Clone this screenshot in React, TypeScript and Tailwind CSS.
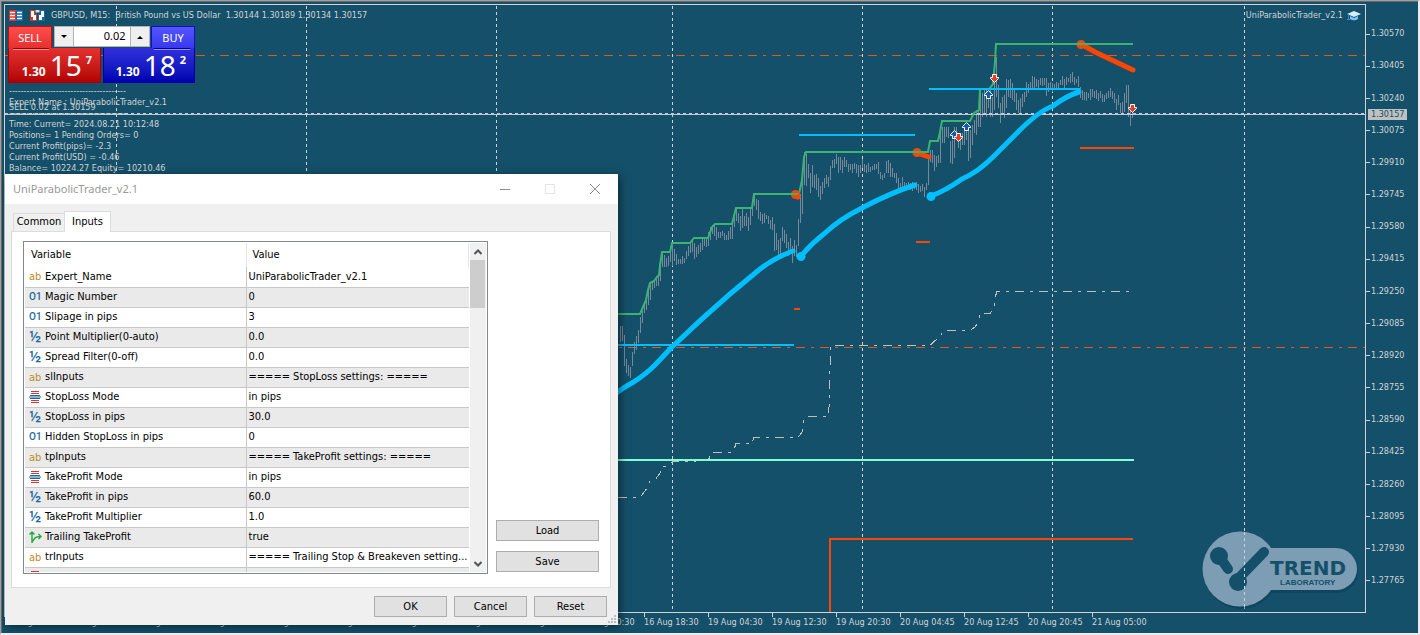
import React from 'react';

type VarType = 'string' | 'int' | 'double' | 'enum' | 'bool';

interface InputVariable {
  type: VarType;
  name: string;
  value: string;
}

const variables: InputVariable[] = [
  { type: 'string', name: 'Expert_Name', value: 'UniParabolicTrader_v2.1' },
  { type: 'int', name: 'Magic Number', value: '0' },
  { type: 'int', name: 'Slipage in pips', value: '3' },
  { type: 'double', name: 'Point Multiplier(0-auto)', value: '0.0' },
  { type: 'double', name: 'Spread Filter(0-off)', value: '0.0' },
  { type: 'string', name: 'slInputs', value: '===== StopLoss settings: =====' },
  { type: 'enum', name: 'StopLoss Mode', value: 'in pips' },
  { type: 'double', name: 'StopLoss in pips', value: '30.0' },
  { type: 'int', name: 'Hidden StopLoss in pips', value: '0' },
  { type: 'string', name: 'tpInputs', value: '===== TakeProfit settings: =====' },
  { type: 'enum', name: 'TakeProfit Mode', value: 'in pips' },
  { type: 'double', name: 'TakeProfit in pips', value: '60.0' },
  { type: 'double', name: 'TakeProfit Multiplier', value: '1.0' },
  { type: 'bool', name: 'Trailing TakeProfit', value: 'true' },
  { type: 'string', name: 'trInputs', value: '===== Trailing Stop & Breakeven setting...' },
  { type: 'enum', name: '', value: '' },
];

const prices = [
  '1.30570', '1.30405', '1.30240', '1.30075', '1.29910', '1.29745', '1.29580', '1.29415', '1.29250',
  '1.29085', '1.28920', '1.28755', '1.28590', '1.28425', '1.28260', '1.28095', '1.27930', '1.27765',
];

const times = [
  '13 Aug 10:30', '13 Aug 18:30', '14 Aug 02:30', '14 Aug 10:30', '14 Aug 18:30', '15 Aug 02:30',
  '15 Aug 10:30', '15 Aug 18:30', '16 Aug 02:30', '16 Aug 10:30', '16 Aug 18:30', '19 Aug 04:30',
  '19 Aug 12:30', '19 Aug 20:30', '20 Aug 04:45', '20 Aug 12:45', '20 Aug 20:45', '21 Aug 05:00',
];

// high/low of every candle, one each two pixels, starting at x = 620
const bars: [number, number][] = [
  [326, 342], [326, 341], [335, 366], [359, 373], [365, 376], [367, 378], [352, 366], [342, 354], [336, 350], [330, 343],
  [317, 333], [308, 323], [303, 313], [298, 310], [290, 305], [282, 300], [282, 290], [280, 288], [277, 286], [274, 286],
  [264, 281], [253, 267], [255, 267], [258, 267], [256, 266], [249, 262], [245, 266], [249, 261], [254, 265], [259, 264],
  [259, 264], [256, 264], [258, 263], [251, 259], [246, 256], [243, 253], [241, 252], [243, 259], [247, 257], [245, 254],
  [243, 252], [239, 250], [238, 246], [238, 247], [232, 246], [227, 240], [225, 234], [225, 236], [227, 240], [232, 238],
  [232, 238], [231, 236], [233, 240], [235, 240], [231, 240], [227, 239], [223, 239], [217, 227], [208, 221], [213, 223],
  [216, 231], [208, 228], [216, 226], [213, 226], [217, 231], [208, 225], [200, 216], [194, 206], [199, 210], [200, 219],
  [212, 221], [214, 224], [213, 223], [215, 219], [216, 224], [220, 229], [217, 230], [224, 251], [233, 250], [240, 256],
  [238, 254], [227, 241], [230, 243], [234, 248], [242, 256], [238, 252], [246, 263], [240, 256], [245, 257], [219, 246],
  [194, 223], [170, 214], [152, 185], [154, 186], [164, 178], [173, 193], [165, 187], [175, 188], [174, 190], [178, 197],
  [186, 200], [182, 194], [178, 188], [175, 184], [177, 187], [166, 180], [160, 168], [159, 168], [154, 164], [157, 173],
  [157, 170], [160, 173], [157, 167], [160, 167], [164, 172], [164, 170], [164, 173], [163, 169], [164, 173], [165, 177],
  [165, 173], [159, 168], [164, 172], [165, 173], [163, 172], [167, 172], [166, 170], [164, 170], [164, 169], [162, 174],
  [172, 179], [175, 180], [173, 178], [161, 173], [160, 173], [163, 177], [168, 177], [173, 178], [173, 183], [178, 188],
  [183, 190], [177, 188], [182, 190], [183, 190], [182, 189], [183, 190], [182, 191], [183, 189], [182, 190], [184, 193],
  [186, 192], [184, 191], [187, 197], [183, 190], [157, 185], [150, 162], [150, 163], [155, 171], [156, 167], [155, 163],
  [130, 163], [127, 143], [127, 143], [127, 137], [127, 138], [141, 163], [140, 164], [127, 158], [127, 140], [133, 148],
  [140, 150], [133, 145], [130, 145], [125, 140], [130, 161], [130, 158], [125, 145], [120, 133], [110, 135], [110, 127],
  [90, 127], [93, 117], [90, 115], [90, 117], [95, 108], [90, 117], [97, 117], [80, 110], [57, 97], [85, 108],
  [103, 123], [97, 115], [95, 118], [79, 108], [80, 97], [79, 98], [83, 100], [88, 102], [93, 110], [100, 113],
  [98, 113], [94, 107], [92, 102], [82, 97], [84, 93], [82, 90], [76, 90], [77, 90], [79, 87], [80, 88],
  [78, 85], [78, 86], [78, 85], [78, 96], [83, 92], [82, 88], [83, 92], [84, 89], [82, 88], [83, 88],
  [80, 85], [76, 85], [79, 90], [77, 85], [78, 82], [74, 83], [72, 82], [77, 85], [79, 83], [76, 87],
  [87, 98], [90, 100], [92, 100], [92, 101], [93, 98], [89, 100], [89, 97], [91, 98], [90, 99], [93, 101],
  [91, 98], [94, 102], [95, 102], [93, 99], [91, 98], [88, 97], [91, 99], [93, 103], [99, 110], [95, 105],
  [103, 113], [102, 113], [93, 112], [85, 103], [85, 117], [106, 126], [107, 118],
];

const barsPath = bars.map(([high, low], i) => `M${620.5 + i * 2} ${high}V${low}`).join('');

const arrows = [
  { x: 988, y: 94, up: true },
  { x: 966, y: 126, up: true },
  { x: 954, y: 134, up: true },
  { x: 958, y: 137, up: false },
  { x: 994, y: 78, up: false },
  { x: 1132, y: 108, up: false },
];

function Chart() {
  return (
    <svg className="absolute inset-0 h-full w-full" viewBox="5 5 1360 607" preserveAspectRatio="none" fill="none">
      <g stroke="#d3d3d3" strokeDasharray="3 3" shapeRendering="crispEdges">
        {[116.5, 306.5, 496.5, 672.5, 862.5, 1052.5, 1244.5].map((x) => (
          <path key={x} d={`M${x} 6V612`} />
        ))}
      </g>
      <g stroke="#e8541a" strokeDasharray="9 6 3 6" shapeRendering="crispEdges">
        <path d="M4 55.5H1365" />
        <path d="M4 347.5H1365" />
      </g>
      <path d={barsPath} stroke="#778899" shapeRendering="crispEdges" />
      <path d="M5 113.5H1365" stroke="#c9c9ec" strokeDasharray="3 3" shapeRendering="crispEdges" />
      <path d="M5 114.5H1365" stroke="#c8c8c8" shapeRendering="crispEdges" />

      <path
        d="M618 497.5H640L642 495L647 488L650 481L656 478.500L660 473L662 466.500H668L672 462L685 461.500L708 460.500L712 452.500H733L736 443.500H752L754 437.500H798L802 432L804 420L806 416.500H828.500L829.500 398L830.500 345.500H930L935 340.500L940 338L943 330.500H970L975 327L979 321L980 313.500H990L994 307L996.500 291.500H1132"
        stroke="#c0c0c0"
        strokeDasharray="9 6 3 6"
        shapeRendering="crispEdges"
      />

      <g stroke="#3cb371" strokeWidth="2">
        <path d="M618 314H640L643 307L646 300L648 290L650 283L654 281L657 277L659 275L660 265L662 252H670L672 243H690L694 238H708L712 227L715 224H732L736 208H752L754 194H799L802 180L804 157L806 152H928L930 141H938L940 132L942 121H970L974 113L979 110L980 89H989L993 84L995 62L996 44H1133" />
      </g>
      <g stroke="#00bfff" strokeWidth="2">
        <path d="M618 345H794M799 135H915M929 89H1080" />
      </g>
      <g stroke="#00bfff" strokeWidth="5" strokeLinecap="round" strokeLinejoin="round">
        <path d="M614 395Q624 387 632 383Q645 375 655 365L672 347Q700 320 730 294L760 269Q776 257 793 251" />
        <path d="M801 256Q812 243 825 233Q840 219 862 208Q890 193 915 185" />
        <path d="M931 196Q945 191 962 179Q978 172 993 157L1013 137Q1038 111 1053 106Q1066 96 1079 92" />
      </g>
      <g fill="#00bfff">
        <circle cx="801" cy="256.500" r="4.500" />
        <circle cx="931" cy="196.500" r="4.500" />
      </g>

      <g stroke="#ff4500" strokeWidth="5" strokeLinecap="round">
        <path d="M796 195L798 197M917 153L929 157M1081 44L1095 52L1133 70" />
      </g>
      <g fill="#ff4500">
        <circle cx="795.500" cy="194.500" r="4.500" />
        <circle cx="917" cy="152.500" r="4.500" />
        <circle cx="1081" cy="44.500" r="4.500" />
      </g>
      <path d="M754 194H798M905 152H928M1074 44H1133" stroke="#3cb371" strokeWidth="2" />
      <path d="M794 309H800M916 242H930M1080 148H1134M830 612V539H1133" stroke="#ff4500" strokeWidth="2" />
      <path d="M618 460H1134" stroke="#7fffd4" strokeWidth="2" />

      {arrows.map((a) => (
        <path
          key={`${a.x}-${a.y}`}
          transform={`translate(${a.x + 0.5} ${a.y + 0.5})`}
          d={a.up ? 'M0-4L4 0V1H2V4H-2V1H-4V0Z' : 'M0 4L4 0V-1H2V-4H-2V-1H-4V0Z'}
          fill={a.up ? '#0b5cb8' : '#e8401c'}
          stroke="#ffffff"
        />
      ))}
    </svg>
  );
}

function Watermark() {
  return (
    <svg className="absolute right-1 bottom-0 h-[88px] w-[166px]" viewBox="1195 524 166 88">
      <g fill="#0b3a50" opacity="0.45" transform="translate(1 3)">
        <circle cx="1240" cy="569" r="37" />
        <rect x="1240" y="548" width="117" height="42" rx="21" />
      </g>
      <g fill="#7c9db3">
        <circle cx="1240" cy="569" r="37.500" />
        <rect x="1240" y="548" width="117" height="42" rx="21" />
      </g>
      <g fill="#14506a" stroke="#14506a" strokeLinecap="round">
        <circle cx="1219" cy="556" r="9" stroke="none" />
        <path d="M1219 556L1228 569" strokeWidth="10" />
        <circle cx="1238" cy="582" r="9" stroke="none" />
        <path d="M1238 579L1264 552" strokeWidth="10" />
      </g>
      <path d="M1244.500 532V607" stroke="#c5d2da" strokeDasharray="3 3" />
      <text x="1270" y="575" fill="#14506a" fontFamily="DejaVu Sans, sans-serif" fontSize="20" fontWeight="700">
        TREND
      </text>
      <text x="1280" y="585" fill="#14506a" fontFamily="Liberation Sans, sans-serif" fontSize="8" fontWeight="700">
        LABORATORY
      </text>
    </svg>
  );
}

function ChartHeader() {
  return (
    <div className="flex h-3 items-center pr-1 pl-1 whitespace-pre">
      <svg className="h-3 w-[14px]" viewBox="0 0 14 12">
        <path d="M0 0H7V11H0Z" fill="#d9352c" />
        <path d="M7 0H14V11H7Z" fill="#1565a8" />
        <path d="M1 2.500H6M1 5.500H6M1 8.500H6M8 2.500H13M8 5.500H13M8 8.500H13" stroke="#fff" strokeWidth="1.500" />
      </svg>
      <svg className="ml-[7px] h-3 w-[15px]" viewBox="0 0 15 12">
        <path d="M0 0H5V4H7V11H0Z" fill="#d9352c" />
        <path d="M15 0H10V4H8V11H15Z" fill="#1565a8" />
        <path d="M1 1H4V5H6V10H3V7H1ZM14 1H11V5H9V10H12V7H14Z" fill="#fff" />
        <path d="M5.500 0H9.500V2.500H5.500Z" fill="#ddd" />
      </svg>
      <span className="ml-1.5">{'GBPUSD, M15:  British Pound vs US Dollar  1.30144 1.30189 1.30134 1.30157'}</span>
      <span className="ml-auto">UniParabolicTrader_v2.1</span>
      <svg className="ml-1 h-3 w-[14px]" viewBox="0 0 14 12">
        <path d="M7 1L14 4L7 7L0 4Z" fill="#d6efff" />
        <path d="M3 6L7 8L11 6V9Q7 11.500 3 9Z" fill="#7cc6f5" />
        <path d="M1.500 4V9M0 9.500H3" stroke="#2b8fd6" fill="none" />
      </svg>
    </div>
  );
}

function TradePanel() {
  return (
    <div className="mt-1 ml-[3px] w-[187px] font-['Noto_Sans',sans-serif] text-white">
      <div className="flex h-[22px] justify-between">
        <button className="w-11 border border-b-0 border-[#c40d0d] bg-linear-to-b from-[#ff4d4d] to-[#e53030] text-[11px] leading-5">SELL</button>
        <div className="flex h-[21px] w-24 border border-[#b4b4b4] bg-[#b4b4b4] text-black">
          <button className="flex w-[18px] items-center justify-center bg-[#efefef]" aria-label="Decrease volume">
            <svg className="h-1 w-1.5" viewBox="0 0 6 4"><path d="M0 0H6L3 3Z" /></svg>
          </button>
          <input
            className="mx-px w-0 flex-1 bg-white pr-1 text-right text-[11px] outline-none"
            defaultValue="0.02"
            aria-label="Volume"
          />
          <button className="flex w-[18px] items-center justify-center bg-[#efefef]" aria-label="Increase volume">
            <svg className="h-1 w-1.5" viewBox="0 0 6 4"><path d="M0 4H6L3 1Z" /></svg>
          </button>
        </div>
        <button className="w-11 border border-b-0 border-[#1010c4] bg-linear-to-b from-[#5555ff] to-[#3838ee] text-[11px] leading-5">BUY</button>
      </div>
      <div className="flex h-[35px] justify-between">
        <PriceButton base="1.30" big="15" point="7" side="sell" />
        <PriceButton base="1.30" big="18" point="2" side="buy" />
      </div>
    </div>
  );
}

interface PriceButtonProps {
  base: string;
  big: string;
  point: string;
  side: 'sell' | 'buy';
}

function PriceButton({ base, big, point, side }: PriceButtonProps) {
  const sell = side === 'sell';
  return (
    <button
      aria-label={`${side} at ${base}${big}${point}`}
      className={
        sell
          ? 'relative flex w-[93px] items-end justify-end border border-t-0 border-[#a80000] bg-linear-to-b from-[#e53030] to-[#b20000] pr-2'
          : 'relative flex w-[92px] items-end justify-end border border-t-0 border-[#0000a0] bg-linear-to-b from-[#3030dd] to-[#0000b0] pr-2'
      }
    >
      <span
        className={
          sell
            ? 'absolute top-0 left-1 w-9 border-t border-b border-t-[#900] border-b-[#ff9090]'
            : 'absolute top-0 right-1 w-9 border-t border-b border-t-[#009] border-b-[#9090ff]'
        }
      />
      <span className="mb-1 text-[12px] leading-3 font-bold">{base}</span>
      <span className="ml-1 text-[28px] leading-[34px]">{big}</span>
      <span className="mb-auto ml-1 pt-1 text-[11px] leading-4 font-bold">{point}</span>
    </button>
  );
}

function Comments() {
  return (
    <div className="relative mt-[3px] ml-1 leading-[11px] whitespace-pre">
      <p>----------------------------------------</p>
      <p>Expert Name : UniParabolicTrader_v2.1</p>
      <p>----------------------------------------</p>
      <p>Time: Current= 2024.08.21 10:12:48</p>
      <p>Positions= 1 Pending Orders= 0</p>
      <p>Current Profit(pips)= -2.3</p>
      <p>Current Profit(USD) = -0.46</p>
      <p>Balance= 10224.27 Equity= 10210.46</p>
      <p className="absolute top-4 left-0">SELL 0.02 at 1.30159</p>
    </div>
  );
}

function TypeIcon({ type }: { type: VarType }) {
  switch (type) {
    case 'string':
      return <span className="text-[11px] text-[#c08a2a]">ab</span>;
    case 'int':
      return <span className="font-[Roboto] text-[10px] font-medium text-[#1c67a0]">O1</span>;
    case 'double':
      return <span className="font-[Roboto] text-[16px] font-medium text-[#1c67a0]">½</span>;
    case 'enum':
      return (
        <svg className="h-3 w-3" viewBox="0 0 12 12">
          <path d="M2 .500H10M2 2.500H10M2 9.500H10M2 11.500H10" stroke="#d9352c" />
          <path d="M1 4.500H11M0 6H12M1 7.500H11" stroke="#1c67a0" />
        </svg>
      );
    default:
      return (
        <svg className="h-3 w-[13px]" viewBox="0 0 13 12" fill="none" stroke="#22a83c">
          <path d="M3 12V1M.500 3.500L3 1L5.500 3.500M3 11L6 7Q7.500 5.500 12 5.500M9.500 3L12 5.500L9.500 8" strokeWidth="1.400" />
        </svg>
      );
  }
}

const dialogButton = 'h-[21px] border border-[#adadad] bg-[#e1e1e1] text-center leading-[19px]';

function InputsDialog() {
  return (
    <section
      role="dialog"
      aria-label="UniParabolicTrader_v2.1"
      className="absolute top-[173px] left-1 w-[613px] bg-[#f0f0f0] pb-2 font-['DejaVu_Sans_Condensed','DejaVu_Sans',sans-serif] text-[11px] text-black shadow-[2px_2px_8px_rgba(0,0,0,0.5)]"
    >
      <header className="flex h-[30px] items-center bg-white pr-[17px] pl-2 font-['Noto_Sans',sans-serif] text-[#999]">
        <h1 className="mr-auto">UniParabolicTrader_v2.1</h1>
        <div className="flex items-center gap-[33px]">
          <button aria-label="Minimize">
            <svg className="h-3 w-3" viewBox="0 0 12 12"><path d="M1 6.500H11" stroke="#8c8c8c" /></svg>
          </button>
          <button aria-label="Maximize" disabled>
            <svg className="h-3 w-3" viewBox="0 0 12 12"><path d="M1.500 1.500H10.500V10.500H1.500Z" stroke="#e4e4e4" fill="none" /></svg>
          </button>
          <button aria-label="Close">
            <svg className="h-3 w-3" viewBox="0 0 12 12"><path d="M1 1L11 11M11 1L1 11" stroke="#8c8c8c" /></svg>
          </button>
        </div>
      </header>

      <div className="pt-[7px] pr-[7px] pl-1.5">
        <div className="flex items-end pl-0.5" role="tablist">
          <button role="tab" aria-selected="false" className="h-[18px] w-[51px] border border-r-0 border-b-0 border-[#dcdcdc]">Common</button>
          <button role="tab" aria-selected="true" className="relative -mb-px h-[21px] w-[47px] border border-b-0 border-[#dcdcdc] bg-white">Inputs</button>
        </div>

        <div className="flex gap-2 border border-[#dcdcdc] bg-white pt-[9px] pr-[11px] pb-[13px] pl-[11px]">
          <div className="flex h-[333px] flex-1 border border-[#828790] p-px">
            <div className="h-full flex-1 overflow-hidden">
              <table className="w-full table-fixed border-collapse text-left">
                <thead>
                  <tr className="h-6">
                    <th className="w-[221px] border-r border-[#e5e5e5] pl-1.5 font-normal">Variable</th>
                    <th className="border-r border-[#e5e5e5] pl-1.5 font-normal">Value</th>
                  </tr>
                </thead>
                <tbody>
                  {variables.map((v, i) => (
                    <tr key={i} className="h-5 border-b border-[#c8c8c8] even:bg-[#eaeaea]">
                      <td className="border-r border-[#c8c8c8] p-0 pl-1">
                        <div className="flex h-[19px] items-center">
                          <span className="flex w-4 items-center leading-none">
                            <TypeIcon type={v.type} />
                          </span>
                          <span>{v.name}</span>
                        </div>
                      </td>
                      <td className="truncate p-0 pl-0.5">{v.value}</td>
                    </tr>
                  ))}
                </tbody>
              </table>
            </div>
            <div className="ml-px flex w-4 flex-col bg-[#f0f0f0]">
              <button className="flex h-[17px] w-[15px] items-center justify-center" aria-label="Scroll up">
                <svg className="h-2 w-2" viewBox="0 0 8 8"><path d="M.500 6L4 2.500L7.500 6" stroke="#555" strokeWidth="2" fill="none" /></svg>
              </button>
              <div className="h-12 w-[15px] bg-[#cdcdcd]" />
              <button className="mt-auto flex h-[17px] w-[15px] items-center justify-center" aria-label="Scroll down">
                <svg className="h-2 w-2" viewBox="0 0 8 8"><path d="M.500 2L4 5.500L7.500 2" stroke="#555" strokeWidth="2" fill="none" /></svg>
              </button>
            </div>
          </div>
          <div className="flex w-[103px] flex-col justify-end gap-2.5 pb-0.5">
            <button className={dialogButton}>Load</button>
            <button className={dialogButton}>Save</button>
          </div>
        </div>

        <div className="flex justify-end gap-[7px] pt-2 pr-1">
          <button className={`${dialogButton} w-[73px]`}>OK</button>
          <button className={`${dialogButton} w-[73px]`}>Cancel</button>
          <button className={`${dialogButton} w-[73px]`}>Reset</button>
        </div>
      </div>

      <svg className="absolute right-0.5 bottom-0.5 h-2 w-2" viewBox="0 0 8 8" fill="#bdbdbd">
        <path d="M0 6H2V8H0ZM3 6H5V8H3ZM6 6H8V8H6ZM3 3H5V5H3ZM6 3H8V5H6ZM6 0H8V2H6Z" />
      </svg>
    </section>
  );
}

function PriceScale() {
  return (
    <div className="relative flex flex-col justify-between pt-[22px] pb-6">
      {prices.map((p) => (
        <div key={p} className="flex h-4 items-center gap-px">
          <span className="h-px w-1 bg-[#d3d3d3]" />
          {p}
        </div>
      ))}
      <div className="absolute top-[105px] left-0.5 h-[11px] w-[39px] bg-[#c0c0c0] pl-[3px] leading-[11px] text-[#14506a]">
        1.30157
      </div>
    </div>
  );
}

export default function App() {
  return (
    <main className="relative h-screen w-full overflow-hidden border border-r-2 border-b-2 border-t-[#a0a0a0] border-r-[#e8eef0] border-b-[#e8eef0] border-l-[#a0a0a0] bg-[#14506a] font-['DejaVu_Sans_Condensed','DejaVu_Sans',sans-serif] text-[9px] text-[#d3d3d3]">
      <div className="grid h-full grid-cols-[1fr_52px] grid-rows-[1fr_20px] border-t border-l border-[#696969] pt-0.5 pl-0.5">
        <div className="relative overflow-hidden border border-[#d3d3d3]">
          <Chart />
          <Watermark />
          <div className="relative pt-[5px]">
            <ChartHeader />
            <TradePanel />
            <Comments />
          </div>
        </div>
        <PriceScale />
        <div className="col-span-2 flex overflow-hidden">
          {times.map((t) => (
            <div key={t} className="w-16 shrink-0 whitespace-nowrap">
              <div className="h-1 w-px bg-[#d3d3d3]" />
              <div className="leading-[11px]">{t}</div>
            </div>
          ))}
        </div>
      </div>
      <InputsDialog />
    </main>
  );
}
